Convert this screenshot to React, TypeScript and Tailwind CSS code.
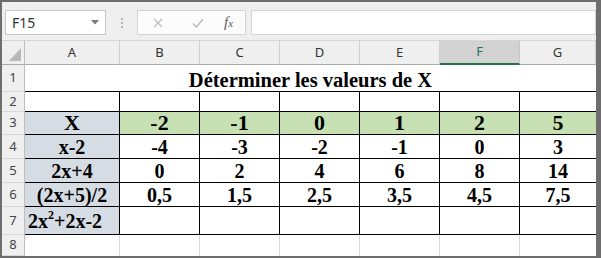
import React from 'react';

const COLS = ['A', 'B', 'C', 'D', 'E', 'F', 'G'];
const WIDTHS = ['w-[95px]', 'w-[80px]', 'w-[80px]', 'w-[80px]', 'w-[80px]', 'w-[80px]', 'w-[76px]'];

const serif = "font-['Liberation_Serif','Times_New_Roman',serif] font-bold text-black";
const ui = "font-['Noto_Sans','Open_Sans',sans-serif]";

type Row = {
  n: number;
  h: string;
  label?: React.ReactNode;
  values?: string[];
  big?: boolean;
  green?: boolean;
};

const rows: Row[] = [
  { n: 3, h: 'h-[23px]', label: 'X', values: ['-2', '-1', '0', '1', '2', '5'], big: true, green: true },
  { n: 4, h: 'h-[24px]', label: 'x-2', values: ['-4', '-3', '-2', '-1', '0', '3'] },
  { n: 5, h: 'h-[24px]', label: '2x+4', values: ['0', '2', '4', '6', '8', '14'] },
  { n: 6, h: 'h-[24px]', label: '(2x+5)/2', values: ['0,5', '1,5', '2,5', '3,5', '4,5', '7,5'] },
];

function RowHead({ n, h }: { n: number; h: string }) {
  return (
    <div className={`${h} w-[23px] shrink-0 flex items-center justify-center bg-[#efefef] border-r border-b border-r-[#bdbdbd] border-b-[#d8d8d8] text-[13px] text-[#444] ${ui}`}>
      {n}
    </div>
  );
}

export default function App() {
  return (
    <div className="w-[601px] h-[258px] overflow-hidden border-t-2 border-l-2 border-b-2 border-r-[5px] border-[#6e6e6e] bg-[#efefef]">
      {/* formula bar */}
      <div className="h-[39px] flex items-start pt-[8px] border-b border-[#d6d6d6]">
        <div className={`ml-[3px] w-[101px] h-[25px] bg-white border border-[#c6c6c6] flex items-center justify-between pl-[6px] pr-[6px] text-[14px] text-[#333] ${ui}`}>
          <span>F15</span>
          <svg width="8" height="5" viewBox="0 0 8 5"><polygon points="0,0 8,0 4,4.5" fill="#7a7a7a" /></svg>
        </div>
        <div className="w-[31px] h-[25px] flex flex-col items-center justify-center gap-[2px]">
          <span className="w-[2px] h-[2px] bg-[#b5b5b5]" />
          <span className="w-[2px] h-[2px] bg-[#b5b5b5]" />
          <span className="w-[2px] h-[2px] bg-[#b5b5b5]" />
        </div>
        <div className="w-[109px] h-[25px] bg-[#fcfcfc] border border-[#d4d4d4] flex items-center">
          <svg className="ml-[15px]" width="10" height="10" viewBox="0 0 10 10">
            <path d="M1 1 L9 9 M9 1 L1 9" stroke="#bdbdbd" strokeWidth="1.2" />
          </svg>
          <svg className="ml-[29px]" width="12" height="10" viewBox="0 0 12 10">
            <path d="M1 5.5 L4.5 9 L11 1" stroke="#bdbdbd" strokeWidth="1.6" fill="none" />
          </svg>
          <span className="ml-[20px] font-['Liberation_Serif',serif] italic text-[15px] text-[#5a5a5a] leading-none">
            f<span className="text-[11px]">x</span>
          </span>
        </div>
        <div className="ml-[5px] flex-1 h-[25px] bg-white border border-[#d4d4d4]" />
      </div>

      {/* column headers */}
      <div className="flex h-[24px]">
        <div className="w-[23px] h-[24px] shrink-0 bg-[#efefef] border-r border-b border-r-[#bdbdbd] border-b-[#ababab] flex items-end justify-end pr-[3px] pb-[3px]">
          <svg width="12" height="13" viewBox="0 0 12 13"><polygon points="12,0 12,13 0,13" fill="#b8b8b8" /></svg>
        </div>
        {COLS.map((c, i) => (
          <div
            key={c}
            className={`${WIDTHS[i]} h-[24px] shrink-0 flex items-center justify-center text-[13px] ${ui} ${
              c === 'F'
                ? 'bg-[#d2d2d2] text-[#217346] border-b-2 border-b-[#217346] border-r border-r-[#c6c6c6]'
                : 'bg-[#efefef] text-[#333] border-b border-b-[#ababab] border-r border-r-[#d0d0d0]'
            }`}
          >
            {c}
          </div>
        ))}
      </div>

      {/* row 1: title */}
      <div className="flex">
        <RowHead n={1} h="h-[27px]" />
        <div className={`w-[571px] h-[27px] bg-white border-b border-black flex items-end justify-center pb-[1px] text-[20.5px] leading-none ${serif}`}>
          Déterminer les valeurs de X
        </div>
      </div>

      {/* row 2: empty bordered */}
      <div className="flex">
        <RowHead n={2} h="h-[20px]" />
        {WIDTHS.map((w, i) => (
          <div key={i} className={`${w} h-[20px] bg-white border-b border-black ${i < 6 ? 'border-r' : ''}`} />
        ))}
      </div>

      {rows.map((r) => (
        <div key={r.n} className="flex">
          <RowHead n={r.n} h={r.h} />
          <div className={`${WIDTHS[0]} ${r.h} bg-[#d6dce4] border-r border-b border-black flex items-center justify-center ${r.big ? 'text-[22px]' : 'text-[20px]'} leading-none ${serif}`}>
            {r.label}
          </div>
          {r.values!.map((v, i) => (
            <div
              key={i}
              className={`${WIDTHS[i + 1]} ${r.h} ${r.green ? 'bg-[#c6e0b4]' : 'bg-white'} border-b border-black ${i < 5 ? 'border-r' : ''} flex items-center justify-center ${r.big ? 'text-[22px]' : 'text-[20px]'} leading-none ${serif}`}
            >
              {v}
            </div>
          ))}
        </div>
      ))}

      {/* row 7 */}
      <div className="flex">
        <RowHead n={7} h="h-[28px]" />
        <div className={`${WIDTHS[0]} h-[28px] bg-[#d6dce4] border-r border-b border-black flex items-end pl-[3px] pb-[3px] text-[20px] leading-none ${serif}`}>
          <span>
            2x<sup className="text-[12px] -top-[9px]">2</sup>+2x-2
          </span>
        </div>
        {WIDTHS.slice(1).map((w, i) => (
          <div key={i} className={`${w} h-[28px] bg-white border-b border-black ${i < 5 ? 'border-r' : ''}`} />
        ))}
      </div>

      {/* row 8 */}
      <div className="flex">
        <RowHead n={8} h="h-[21px]" />
        {WIDTHS.map((w, i) => (
          <div key={i} className={`${w} h-[21px] bg-white ${i < 6 ? 'border-r border-[#d9d9d9]' : ''}`} />
        ))}
      </div>
    </div>
  );
}
